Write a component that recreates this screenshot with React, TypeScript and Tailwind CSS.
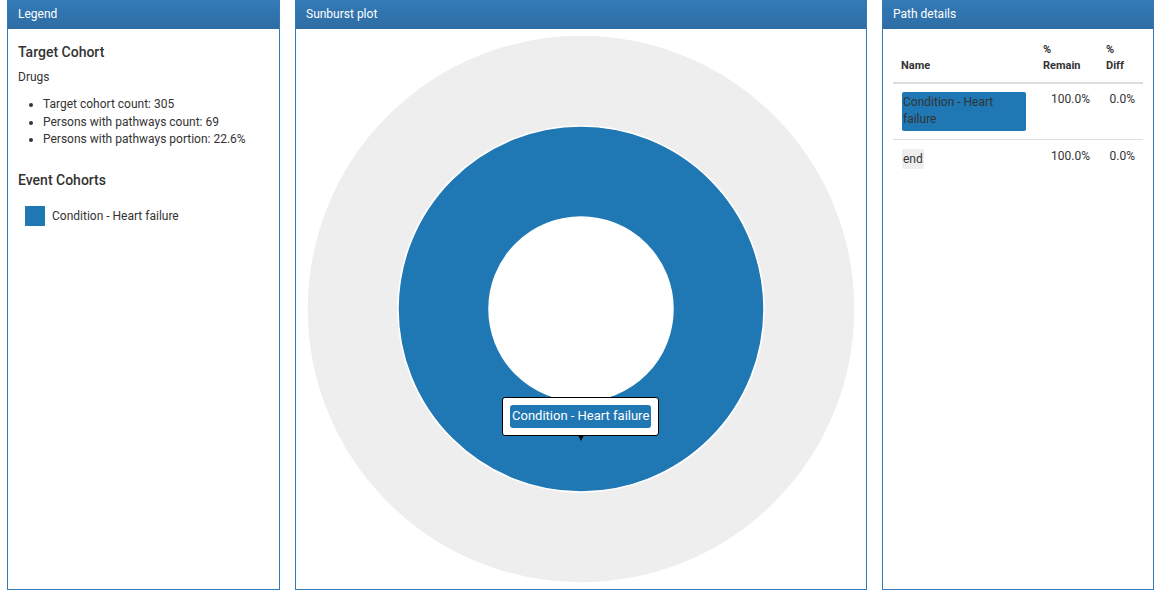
const BLUE = "#1f77b4";

function annulus(cx: number, cy: number, r0: number, r1: number) {
  return [
    `M ${cx} ${cy - r1}`,
    `A ${r1} ${r1} 0 1 1 ${cx} ${cy + r1}`,
    `A ${r1} ${r1} 0 1 1 ${cx} ${cy - r1}`,
    `Z`,
    `M ${cx} ${cy - r0}`,
    `A ${r0} ${r0} 0 1 0 ${cx} ${cy + r0}`,
    `A ${r0} ${r0} 0 1 0 ${cx} ${cy - r0}`,
    `Z`,
  ].join(" ");
}

function Panel({ title, children, bodyClass }: { title: string; children: React.ReactNode; bodyClass?: string }) {
  return (
    <div className="flex h-[590px] flex-col border border-[#337ab7] bg-white">
      <div className="h-[28px] shrink-0 bg-gradient-to-b from-[#337ab7] to-[#2e6da4] px-[10px] text-[12px] leading-[26px] text-white">
        {title}
      </div>
      <div className={"relative flex-1 " + (bodyClass ?? "")}>{children}</div>
    </div>
  );
}

export default function App() {
  return (
    <div
      className="grid h-[600px] w-[1162px] grid-cols-[273px_572px_272px] gap-[15px] bg-white px-[7px] text-[#333]"
      style={{ fontFamily: "Roboto, 'Liberation Sans', sans-serif" }}
    >
      <Panel title="Legend" bodyClass="px-[10px] pt-[13px]">
        <h3 className="text-[14px] font-medium leading-[20px]">Target Cohort</h3>
        <p className="mt-[7px] text-[12px] leading-[17px]">Drugs</p>
        <ul className="mt-[10px] list-disc pl-[25px] text-[12px] leading-[17.5px]">
          <li>Target cohort count: 305</li>
          <li>Persons with pathways count: 69</li>
          <li>Persons with pathways portion: 22.6%</li>
        </ul>
        <h3 className="mt-[21px] text-[14px] font-medium leading-[20px]">Event Cohorts</h3>
        <div className="mt-[16px] flex items-center gap-[7px] pl-[7px] text-[12px]">
          <span className="h-[20px] w-[20px] bg-[#1f77b4]" />
          <span>Condition - Heart failure</span>
        </div>
      </Panel>

      <Panel title="Sunburst plot">
        <svg width="570" height="560" viewBox="0 0 570 560" className="block">
          <path d={annulus(285, 280, 183, 274)} fill="#eeeeee" fillRule="evenodd" stroke="#fff" strokeWidth="1.5" />
          <path d={annulus(285, 280, 92, 183)} fill={BLUE} fillRule="evenodd" stroke="#fff" strokeWidth="1.5" />
        </svg>
        <div className="absolute left-[206px] top-[368px] rounded-[3px] border border-black bg-white px-[7px] pb-[7px] pt-[7px]">
          <div className="rounded-[3px] bg-[#1f77b4] px-[2px] pb-[1px] text-[13px] leading-[22px] whitespace-nowrap text-white">
            Condition - Heart failure
          </div>
          <div className="absolute left-1/2 top-full -ml-[3px] h-0 w-0 border-x-[3px] border-t-[6px] border-x-transparent border-t-black" />
        </div>
      </Panel>

      <Panel title="Path details" bodyClass="px-[10px] pt-[5px]">
        <table className="w-[250px] border-collapse text-[12px]">
          <thead>
            <tr className="border-b-2 border-[#ddd] text-[11px] font-bold leading-[16px]">
              <th className="w-[142px] p-[8px] text-left align-bottom">Name</th>
              <th className="w-[63px] p-[8px] text-left align-bottom">
                %<br />Remain
              </th>
              <th className="p-[8px] text-left align-bottom">
                %<br />Diff
              </th>
            </tr>
          </thead>
          <tbody className="leading-[17px]">
            <tr className="border-b border-[#ddd]">
              <td className="p-[8px] align-top">
                <div className="ml-[1px] w-[124px] rounded-[2px] bg-[#1f77b4] px-[1px] pb-[3.5px] pt-[1.5px]">Condition - Heart failure</div>
              </td>
              <td className="p-[8px] pt-[7px] text-right align-top">100.0%</td>
              <td className="p-[8px] pt-[7px] text-right align-top">0.0%</td>
            </tr>
            <tr>
              <td className="p-[8px] pt-[9px] align-top">
                <span className="ml-[1px] inline-block rounded-[2px] bg-[#eee] px-[1px] pb-[1px] pt-[2px]">end</span>
              </td>
              <td className="p-[8px] pt-[8px] text-right align-top">100.0%</td>
              <td className="p-[8px] pt-[8px] text-right align-top">0.0%</td>
            </tr>
          </tbody>
        </table>
      </Panel>
    </div>
  );
}
